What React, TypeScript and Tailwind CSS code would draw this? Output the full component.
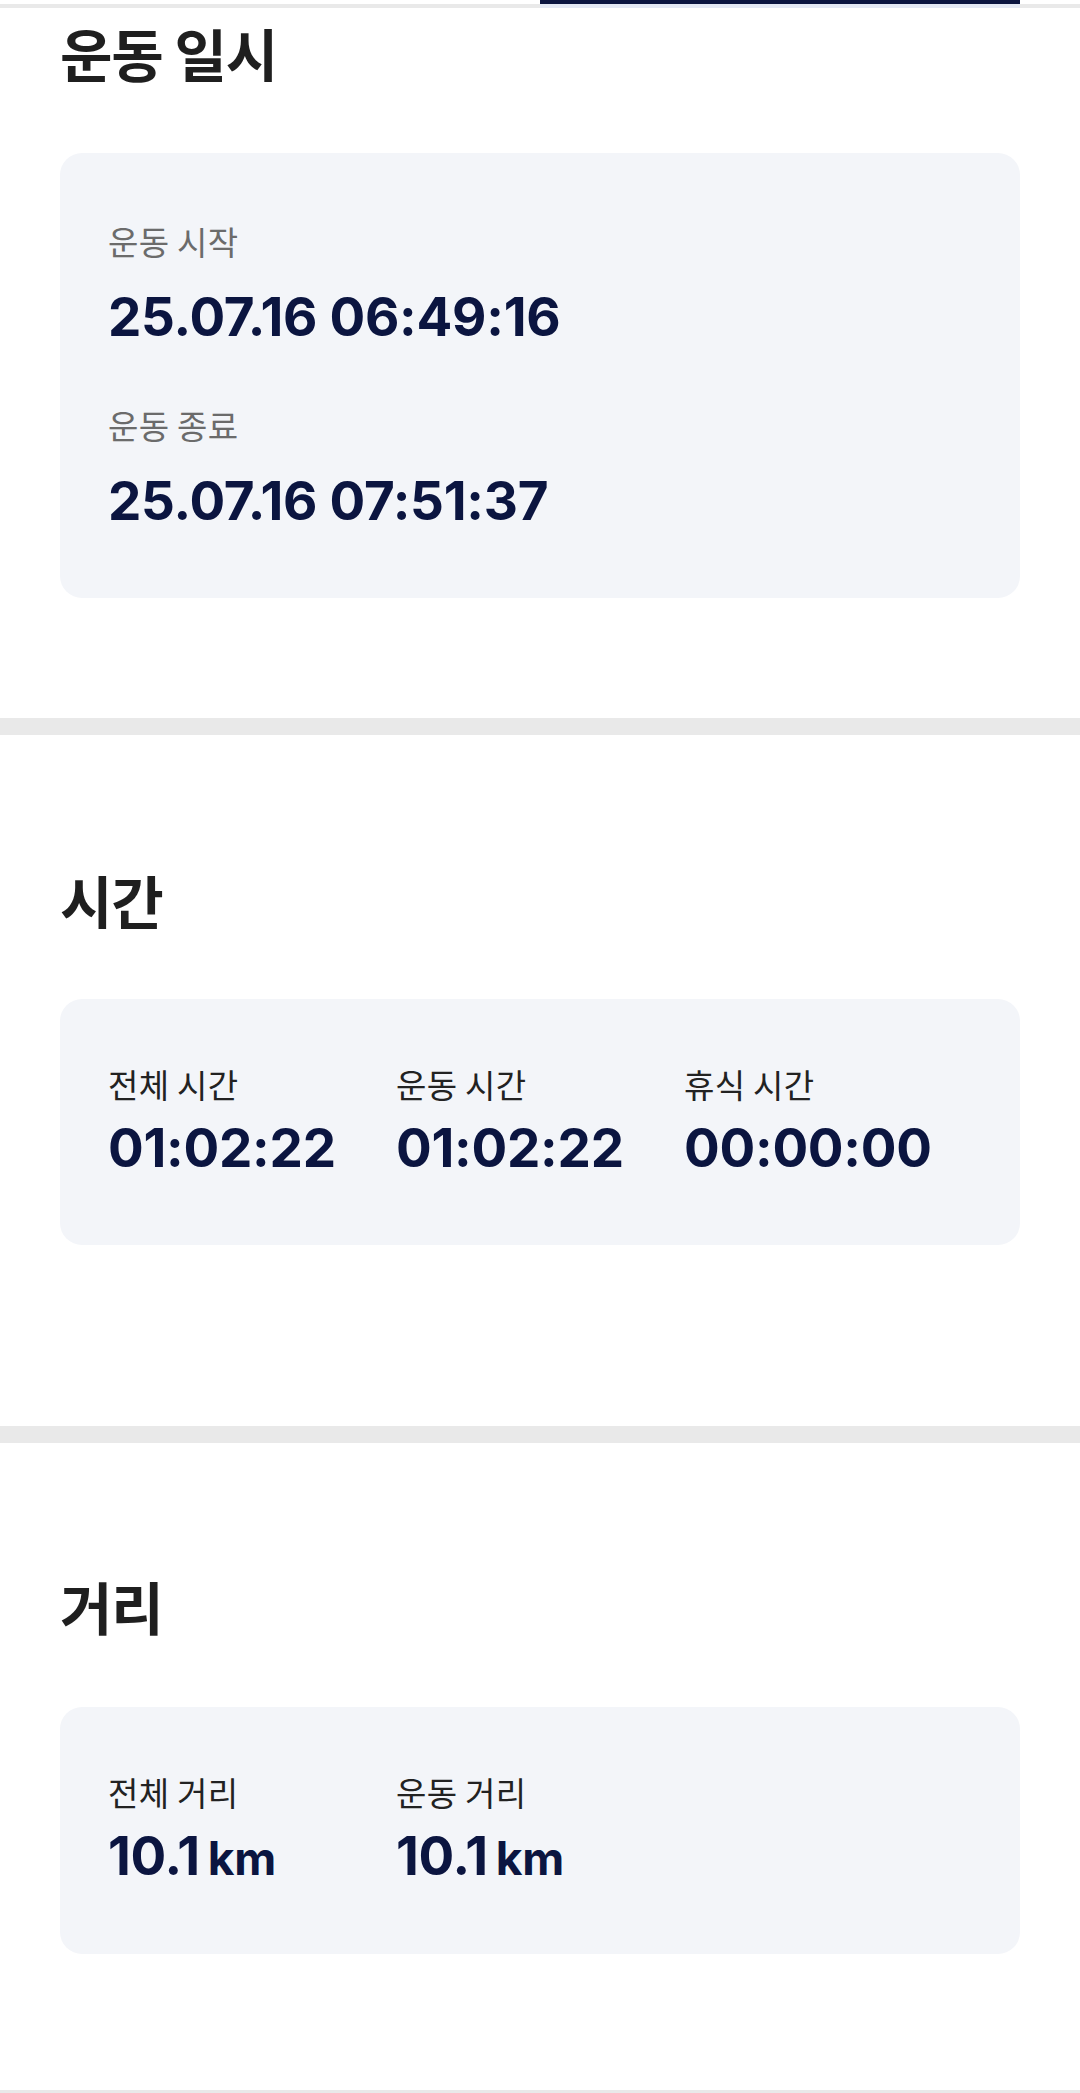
import React from 'react';

const KR = "font-['Noto_Sans_CJK_KR','Noto_Sans',sans-serif]";
const NUM = "font-['Inter','Noto_Sans_CJK_KR',sans-serif]";

function Value({ text, unit }: { text: string; unit?: string }) {
  return (
    <p className={`${NUM} text-[53px] leading-[52px] font-bold tracking-[-0.005em] text-[#0b1540] whitespace-nowrap`}>
      {text}
      {unit && <span className="ml-[8px] text-[46px] font-bold">{unit}</span>}
    </p>
  );
}

function Label({ text, muted }: { text: string; muted?: boolean }) {
  return (
    <p className={`${KR} text-[33px] leading-[32px] tracking-[0.01em] ${muted ? 'text-[#6b6b6b]' : 'text-[#222222]'}`}>
      {text}
    </p>
  );
}

function Title({ text }: { text: string }) {
  return (
    <h2 className={`${KR} text-[57px] leading-[56px] font-bold tracking-[-0.02em] text-[#1f1f1f]`}>{text}</h2>
  );
}

function Divider() {
  return <div className="h-[17px] bg-[#e9e9e9]" />;
}

export default function App() {
  return (
    <div className="w-[1080px] min-h-[2093px] bg-white flex flex-col">
      {/* 탭 인디케이터 */}
      <div className="flex h-[8px]">
        <div className="w-[540px] flex flex-col">
          <div className="h-[4px] bg-white" />
          <div className="h-[4px] bg-[#e9e9e9]" />
        </div>
        <div className="w-[480px] flex flex-col">
          <div className="h-[4px] bg-[#0b1540]" />
          <div className="h-[4px] bg-[#e3e8f4]" />
        </div>
        <div className="flex-1 flex flex-col">
          <div className="h-[4px] bg-white" />
          <div className="h-[4px] bg-[#e9e9e9]" />
        </div>
      </div>

      {/* 운동 일시 */}
      <section className="px-[60px] pt-[16px] pb-[120px]">
        <Title text="운동 일시" />
        <div className="mt-[73px] rounded-[22px] bg-[#f3f5f9] px-[48px] pt-[72px] pb-[71px]">
          <Label text="운동 시작" muted />
          <div className="mt-[34px]"><Value text="25.07.16 06:49:16" /></div>
          <div className="mt-[66px]"><Label text="운동 종료" muted /></div>
          <div className="mt-[34px]"><Value text="25.07.16 07:51:37" /></div>
        </div>
      </section>

      <Divider />

      {/* 시간 */}
      <section className="px-[60px] pt-[136px] pb-[181px]">
        <Title text="시간" />
        <div className="mt-[72px] rounded-[22px] bg-[#f3f5f9] px-[48px] pt-[69px] pb-[71px] grid grid-cols-3">
          {[
            ['전체 시간', '01:02:22'],
            ['운동 시간', '01:02:22'],
            ['휴식 시간', '00:00:00'],
          ].map(([l, v]) => (
            <div key={l}>
              <Label text={l} />
              <div className="mt-[22px]"><Value text={v} /></div>
            </div>
          ))}
        </div>
      </section>

      <Divider />

      {/* 거리 */}
      <section className="px-[60px] pt-[134px] pb-[136px]">
        <Title text="거리" />
        <div className="mt-[74px] rounded-[22px] bg-[#f3f5f9] px-[48px] pt-[69px] pb-[70px] grid grid-cols-3">
          {[
            ['전체 거리', '10.1'],
            ['운동 거리', '10.1'],
          ].map(([l, v]) => (
            <div key={l}>
              <Label text={l} />
              <div className="mt-[22px]"><Value text={v} unit="km" /></div>
            </div>
          ))}
        </div>
      </section>

      <div className="h-[4px] bg-[#e9e9e9]" />
    </div>
  );
}
